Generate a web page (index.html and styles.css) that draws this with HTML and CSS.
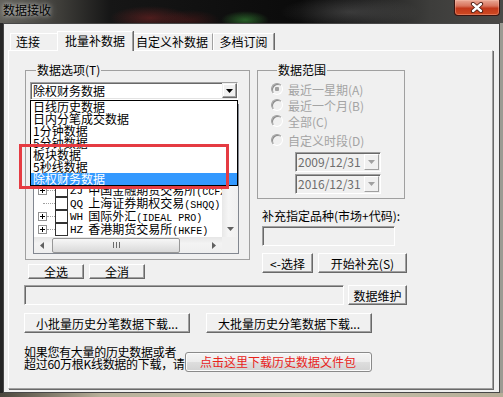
FILE: index.html
```html
<!DOCTYPE html>
<html>

<head>
    <meta charset="utf-8" />
    <meta name="viewport" content="width=device-width, initial-scale=1.0" />
    <title>数据接收</title>
    <link rel="stylesheet" href="styles.css">
</head>

<body>
    <div class="window">
        <div class="titlebar">
            <div class="title">数据接收</div>
            <div class="close-btn">
                <svg width="14" height="11" viewBox="0 0 14 11">
                    <path d="M3 2 L11 9 M11 2 L3 9" stroke="#4a1a10" stroke-width="4.2" stroke-linecap="round" />
                    <path d="M3 2 L11 9 M11 2 L3 9" stroke="#fff" stroke-width="2.4" stroke-linecap="round" />
                </svg>
            </div>
        </div>

        <div class="frame">
            <div class="dialog">
                <div class="tabs">
                    <div class="tab tab-link">连接</div>
                    <div class="tab tab-active">批量补数据</div>
                    <div class="tab tab-custom">自定义补数据</div>
                    <div class="tab tab-depth">多档订阅</div>
                </div>

                <div class="panel">
                    <div class="top">
                        <!-- левая колонка: выбор данных -->
                        <div class="col-left">
                            <fieldset class="group group-options">
                                <legend>数据选项(T)</legend>
                                <div class="combo">
                                    <div class="combo-box">
                                        <span class="combo-value">除权财务数据</span>
                                        <span class="combo-btn">
                                            <svg width="7" height="4" viewBox="0 0 7 4"><polygon points="0,0 7,0 3.5,4" fill="#000" /></svg>
                                        </span>
                                    </div>
                                    <ul class="droplist">
                                        <li>日线历史数据</li>
                                        <li>日内分笔成交数据</li>
                                        <li>1分钟数据</li>
                                        <li>5分钟数据</li>
                                        <li>板块数据</li>
                                        <li>5秒线数据</li>
                                        <li class="selected">除权财务数据</li>
                                    </ul>
                                    <div class="mark"></div>
                                </div>

                                <div class="tree">
                                    <div class="tree-rows">
                                        <div class="node"><span class="node-exp"></span><span class="node-line"></span><span class="check"></span><span class="code">ZJ</span><span class="name">中国金融期货交易所<span class="en">(CCFX)</span></span></div>
                                        <div class="node node-leaf"><span class="node-line"></span><span class="check"></span><span class="code">QQ</span><span class="name">上海证券期权交易<span class="en">(SHQQ)</span></span></div>
                                        <div class="node"><span class="node-exp"></span><span class="node-line"></span><span class="check"></span><span class="code">WH</span><span class="name">国际外汇<span class="en">(IDEAL PRO)</span></span></div>
                                        <div class="node"><span class="node-exp"></span><span class="node-line"></span><span class="check"></span><span class="code">HZ</span><span class="name">香港期货交易所<span class="en">(HKFE)</span></span></div>
                                    </div>
                                    <div class="vscroll">
                                        <span class="sb-arrow">
                                            <svg width="7" height="4" viewBox="0 0 7 4"><polygon points="0,0 7,0 3.5,4" fill="#606060" /></svg>
                                        </span>
                                    </div>
                                    <div class="hscroll">
                                        <span class="sb-arrow">
                                            <svg width="4" height="7" viewBox="0 0 4 7"><polygon points="4,0 4,7 0,3.5" fill="#606060" /></svg>
                                        </span>
                                        <span class="thumb">
                                            <svg width="7" height="6" viewBox="0 0 7 6"><path d="M0.5 0 V6 M3.5 0 V6 M6.5 0 V6" stroke="#6a6a6a" stroke-width="1" /></svg>
                                        </span>
                                        <span class="sb-arrow sb-right">
                                            <svg width="4" height="7" viewBox="0 0 4 7"><polygon points="0,0 0,7 4,3.5" fill="#606060" /></svg>
                                        </span>
                                    </div>
                                    <div class="corner"></div>
                                </div>
                            </fieldset>
                            <div class="btn-row">
                                <button class="btn btn-small">全选</button>
                                <button class="btn btn-small">全消</button>
                            </div>
                        </div>

                        <!-- правая колонка: диапазон -->
                        <div class="col-right">
                            <fieldset class="group group-range">
                                <legend>数据范围</legend>
                                <div class="radio-row"><span class="radio radio-on"></span>最近一星期(A)</div>
                                <div class="radio-row"><span class="radio"></span>最近一个月(B)</div>
                                <div class="radio-row"><span class="radio"></span>全部(C)</div>
                                <div class="radio-row radio-custom"><span class="radio"></span>自定义时段(D)</div>
                                <div class="date date-first">
                                    <span>2009/12/31</span>
                                    <span class="date-btn">
                                        <svg width="7" height="4" viewBox="0 0 7 4"><polygon points="0,0 7,0 3.5,4" fill="#a0a0a0" /></svg>
                                    </span>
                                </div>
                                <div class="date date-second">
                                    <span>2016/12/31</span>
                                    <span class="date-btn">
                                        <svg width="7" height="4" viewBox="0 0 7 4"><polygon points="0,0 7,0 3.5,4" fill="#a0a0a0" /></svg>
                                    </span>
                                </div>
                            </fieldset>
                            <div class="field-label">补充指定品种(市场+代码):</div>
                            <div class="edit"></div>
                            <div class="btn-row btn-row-right">
                                <button class="btn btn-pick">&lt;-选择</button>
                                <button class="btn btn-start">开始补充(S)</button>
                            </div>
                        </div>
                    </div>

                    <div class="row-maint">
                        <div class="progress"></div>
                        <button class="btn btn-maint">数据维护</button>
                    </div>

                    <div class="row-download">
                        <button class="btn btn-download">小批量历史分笔数据下载...</button>
                        <button class="btn btn-download">大批量历史分笔数据下载...</button>
                    </div>

                    <div class="row-pack">
                        <p class="pack-text">如果您有大量的历史数据或者<br>超过60万根K线数据的下载，请</p>
                        <button class="btn-pack">点击这里下载历史数据文件包</button>
                    </div>
                </div>
            </div>
        </div>
        <div class="frame-bottom"></div>
    </div>
</body>

</html>
```

FILE: styles.css
```css
/* Общие стили */
body {
    margin: 0;
    width: 503px;
    height: 397px;
    overflow: hidden;
    background: #1c1c1c;
    font-family: "Noto Sans CJK SC", sans-serif;
    font-size: 12px;
    color: #000;
}

.window {
    display: flex;
    flex-direction: column;
    width: 503px;
    height: 397px;
    background:
        radial-gradient(ellipse 40px 12px at 150px 18px, rgba(150, 40, 40, 0.45), transparent),
        radial-gradient(ellipse 30px 10px at 190px 20px, rgba(120, 30, 30, 0.35), transparent),
        radial-gradient(ellipse 24px 9px at 245px 20px, rgba(60, 160, 60, 0.55), transparent),
        radial-gradient(ellipse 70px 16px at 350px 12px, rgba(120, 120, 120, 0.35), transparent),
        linear-gradient(90deg, #62615b 0, #3e3d39 60px, #161616 110px, #0b0b0b 300px, #1d1d1d 360px, #3d3d3b 430px, #4a4947 503px);
}

/* Заголовок окна */
.titlebar {
    display: flex;
    justify-content: space-between;
    align-items: flex-start;
    height: 23px;
    flex: none;
}

.title {
    margin: 3px 0 0 3px;
    line-height: 14px;
    color: #000;
    text-shadow: 0 0 4px rgba(255, 255, 255, 0.7), 0 0 8px rgba(255, 255, 255, 0.5);
}

.close-btn {
    display: flex;
    justify-content: center;
    align-items: center;
    width: 46px;
    height: 16px;
    margin-right: 3px;
    box-sizing: border-box;
    border: 1px solid #3b1410;
    border-top: none;
    border-radius: 0 0 4px 4px;
    background: linear-gradient(#e9a896 0, #d8735c 40%, #c2381b 55%, #cf4a22 100%);
    box-shadow: inset 0 0 0 1px rgba(255, 200, 180, 0.35);
}

.frame {
    display: flex;
    flex: none;
    height: 370px;
    background: linear-gradient(90deg, #262626 0 3px, #9c9a92 3px);
}

.frame-bottom {
    flex: 1;
    background: linear-gradient(90deg, #4a463c, #b8b09a 20%, #c9c3ae 60%, #b5ad97);
}

.dialog {
    width: 497px;
    height: 370px;
    margin-left: 3px;
    box-sizing: border-box;
    border: 1px solid #474747;
    background: #f0f0f0;
    padding: 7px 0 0 4px;
}

/* Вкладки */
.tabs {
    display: flex;
    height: 19px;
    padding-left: 2px;
}

.tab {
    box-sizing: border-box;
    height: 17px;
    margin-top: 2px;
    border: 1px solid;
    border-color: #fff #a0a0a0 transparent #fff;
    border-bottom: none;
    box-shadow: 1px 0 0 #696969;
    background: #f0f0f0;
    line-height: 15px;
    text-align: center;
    white-space: nowrap;
}

.tab-link {
    width: 49px;
    padding-left: 5px;
    text-align: left;
}

.tab-active {
    position: relative;
    z-index: 1;
    width: 76px;
    height: 20px;
    margin: 0 -2px;
    line-height: 17px;
}

.tab-custom {
    width: 82px;
}

.tab-depth {
    width: 61px;
}

.panel {
    box-sizing: border-box;
    width: 485px;
    height: 339px;
    border: 1px solid;
    border-color: #fff #a0a0a0 #a0a0a0 #fff;
    box-shadow: 1px 1px 0 #696969;
    padding: 12px 0 0 15px;
}

.top {
    display: flex;
}

.col-left {
    width: 233px;
}

.col-right {
    width: 150px;
}

/* Группы */
.group {
    margin: 0;
    box-sizing: border-box;
    border: 1px solid #a0a0a0;
    min-width: 0;
}

.group legend {
    padding: 0 1px;
    margin-left: 6px;
    line-height: 14px;
}

.group-options {
    width: 225px;
    margin-left: 1px;
    padding: 5px 0 5px 4px;
}

/* Выпадающий список */
.combo {
    position: relative;
    width: 208px;
    height: 18px;
}

.combo-box {
    display: flex;
    align-items: center;
    box-sizing: border-box;
    height: 18px;
    border: 1px solid;
    border-color: #a0a0a0 #fff #fff #a0a0a0;
    box-shadow: inset 1px 1px 0 #696969, inset -1px -1px 0 #e3e3e3;
    background: #fff;
    padding-left: 2px;
}

.combo-value {
    flex: 1;
    line-height: 14px;
}

.combo-btn {
    display: flex;
    justify-content: center;
    align-items: center;
    align-self: flex-start;
    box-sizing: border-box;
    width: 15px;
    height: 15px;
    border: 1px solid;
    border-color: #f0f0f0 #696969 #696969 #f0f0f0;
    box-shadow: inset -1px -1px 0 #a0a0a0, inset 1px 1px 0 #fff;
    background: #f0f0f0;
}

.droplist {
    position: absolute;
    top: 18px;
    left: 0;
    z-index: 2;
    box-sizing: border-box;
    width: 208px;
    height: 86px;
    margin: 0;
    padding: 0;
    list-style: none;
    border: 1px solid #000;
    background: #fff;
    overflow: hidden;
}

.droplist li {
    height: 12px;
    line-height: 12px;
    padding-left: 2px;
    white-space: nowrap;
}

.droplist .selected {
    height: 13px;
    background: #3399ff;
    color: #fff;
}

/* Красная рамка-пометка */
.mark {
    position: absolute;
    left: -11px;
    top: 62px;
    z-index: 3;
    box-sizing: border-box;
    width: 210px;
    height: 45px;
    border: 3px solid #e53b42;
}

/* Дерево рынков (прокручено вниз, верх закрыт списком) */
.tree {
    display: grid;
    grid-template-columns: 188px 16px;
    grid-template-rows: 132px 16px;
    box-sizing: border-box;
    width: 206px;
    height: 150px;
    margin: 4px 0 0 3px;
    border: 1px solid #828790;
    background: #fff;
}

.tree-rows {
    overflow: hidden;
    padding-top: 79px;
}

.node {
    display: flex;
    align-items: center;
    height: 13px;
    white-space: nowrap;
}

.node-exp {
    flex: none;
    box-sizing: border-box;
    width: 9px;
    height: 9px;
    margin-left: 4px;
    border: 1px solid #919191;
    background:
        linear-gradient(#000, #000) center / 5px 1px no-repeat,
        linear-gradient(#000, #000) center / 1px 5px no-repeat,
        #fff;
}

.node-line {
    flex: none;
    width: 8px;
    border-top: 1px dotted #a0a0a0;
}

.node-leaf .node-line {
    width: 12px;
    margin-left: 9px;
}

.check {
    flex: none;
    box-sizing: border-box;
    width: 13px;
    height: 13px;
    border: 1px solid #333;
    background: #fff;
}

.code {
    margin-left: 2px;
    font-family: "Liberation Mono", monospace;
    font-size: 11px;
}

.name {
    margin-left: 5px;
    line-height: 13px;
}

.en {
    font-family: "Liberation Mono", monospace;
    font-size: 10px;
}

.vscroll {
    display: flex;
    flex-direction: column;
    justify-content: flex-end;
    background: linear-gradient(90deg, #e8e8e8, #f5f5f5 40%, #f0f0f0);
}

.hscroll {
    display: flex;
    align-items: center;
    background: linear-gradient(#e6e6e6, #f3f3f3 40%, #eeeeee);
}

.sb-arrow {
    display: flex;
    justify-content: center;
    align-items: center;
    flex: none;
    width: 16px;
    height: 16px;
}

.sb-right {
    margin-left: auto;
}

.thumb {
    display: flex;
    justify-content: center;
    align-items: center;
    box-sizing: border-box;
    width: 128px;
    height: 15px;
    margin-left: 2px;
    border: 1px solid #979797;
    border-radius: 2px;
    background: linear-gradient(#f7f7f7, #e8e8e8 50%, #d9d9d9);
}

.corner {
    background: #f0f0f0;
}

/* Кнопки */
.btn {
    box-sizing: border-box;
    padding: 0;
    border: 1px solid;
    border-color: #fff #696969 #696969 #fff;
    box-shadow: inset -1px -1px 0 #a0a0a0;
    background: #f0f0f0;
    color: #000;
    font-family: inherit;
    font-size: 12px;
    line-height: 13px;
    white-space: nowrap;
}

.btn-row {
    display: flex;
    gap: 5px;
    margin: 4px 0 0 4px;
}

.btn-small {
    width: 56px;
    height: 15px;
}

/* Диапазон */
.group-range {
    width: 148px;
    padding: 4px 0 4px 13px;
}

.radio-row {
    display: flex;
    align-items: center;
    gap: 5px;
    height: 16px;
    color: #a4a4a4;
    white-space: nowrap;
}

.radio-custom {
    margin-top: 3px;
}

.radio {
    flex: none;
    box-sizing: border-box;
    width: 12px;
    height: 12px;
    border: 1px solid;
    border-color: #a0a0a0 #fff #fff #a0a0a0;
    border-radius: 50%;
    box-shadow: inset 1px 1px 0 #8a8a8a;
    background: #f0f0f0;
}

.radio-on {
    background: radial-gradient(circle, #a0a0a0 0 2px, #f0f0f0 2.5px);
}

.date {
    display: flex;
    align-items: center;
    box-sizing: border-box;
    width: 86px;
    height: 20px;
    margin-left: 24px;
    border: 1px solid;
    border-color: #a0a0a0 #fff #fff #a0a0a0;
    box-shadow: inset 1px 1px 0 #696969;
    padding-left: 2px;
    color: #6d6d6d;
    line-height: 14px;
}

.date-first {
    margin-top: 4px;
}

.date-second {
    margin-top: 2px;
}

.date-btn {
    display: flex;
    justify-content: center;
    align-items: center;
    box-sizing: border-box;
    width: 15px;
    height: 16px;
    margin: 0 1px 0 auto;
    border: 1px solid;
    border-color: #fff #a0a0a0 #a0a0a0 #fff;
    background: #f0f0f0;
}

.field-label {
    margin: 10px 0 0 5px;
    line-height: 14px;
    white-space: nowrap;
}

.edit,
.progress {
    box-sizing: border-box;
    height: 20px;
    border: 1px solid;
    border-color: #a0a0a0 #fff #fff #a0a0a0;
    box-shadow: inset 1px 1px 0 #696969;
    background: #f0f0f0;
}

.edit {
    width: 133px;
    margin: 3px 0 0 5px;
}

.btn-row-right {
    margin: 7px 0 0 5px;
}

.btn-pick {
    width: 51px;
    height: 20px;
}

.btn-start {
    width: 89px;
    height: 20px;
}

/* Нижние строки */
.row-maint {
    display: flex;
    gap: 4px;
    margin-top: 6px;
}

.progress {
    width: 320px;
}

.btn-maint {
    width: 59px;
    height: 20px;
}

.row-download {
    display: flex;
    gap: 16px;
    margin-top: 8px;
}

.btn-download {
    width: 166px;
    height: 20px;
}

.row-pack {
    display: flex;
    align-items: flex-end;
    margin-top: 13px;
}

.pack-text {
    margin: 0;
    line-height: 12px;
    letter-spacing: -0.3px;
    white-space: nowrap;
}

.btn-pack {
    box-sizing: border-box;
    width: 187px;
    height: 20px;
    margin-bottom: -2px;
    padding: 0;
    border: 1px solid #8a8a8a;
    border-radius: 3px;
    background: linear-gradient(#f4f4f4 0, #ececec 50%, #dedede 51%, #d2d2d2 100%);
    box-shadow: inset 0 0 0 1px #fbfbfb;
    color: #e8231b;
    font-family: inherit;
    font-size: 12px;
    line-height: 14px;
    white-space: nowrap;
}
```
